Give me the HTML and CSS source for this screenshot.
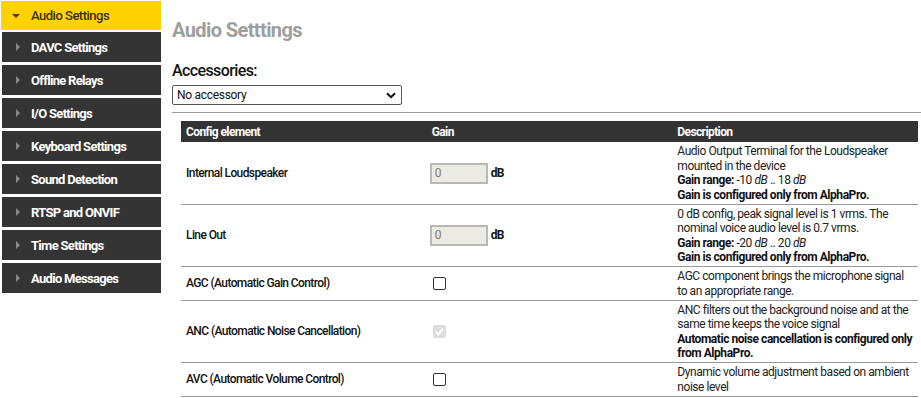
FILE: index.html
```html
<!DOCTYPE html>
<html>
<head>
<meta charset="utf-8">
<link rel="stylesheet" href="styles.css">
</head>
<body>
<div class="page">
  <nav class="sidebar">
    <div class="nav-item active"><span class="tri-down"></span>Audio Settings</div>
    <div class="nav-item"><span class="tri-right"></span>DAVC Settings</div>
    <div class="nav-item"><span class="tri-right"></span>Offline Relays</div>
    <div class="nav-item"><span class="tri-right"></span>I/O Settings</div>
    <div class="nav-item"><span class="tri-right"></span>Keyboard Settings</div>
    <div class="nav-item"><span class="tri-right"></span>Sound Detection</div>
    <div class="nav-item"><span class="tri-right"></span>RTSP and ONVIF</div>
    <div class="nav-item"><span class="tri-right"></span>Time Settings</div>
    <div class="nav-item"><span class="tri-right"></span>Audio Messages</div>
  </nav>
  <main class="main">
    <h1 class="title">Audio Setttings</h1>
    <h2 class="subtitle">Accessories:</h2>
    <div class="select">
      <span>No accessory</span>
      <svg class="chev" width="10" height="7" viewBox="0 0 10 7"><path d="M1 1.2 L5 5.2 L9 1.2" fill="none" stroke="#111" stroke-width="2"/></svg>
    </div>
    <div class="rule"></div>
    <table class="config">
      <thead>
        <tr><th>Config element</th><th>Gain</th><th>Description</th></tr>
      </thead>
      <tbody>
        <tr>
          <td class="name">Internal Loudspeaker</td>
          <td><span class="gain"><span class="inp">0</span><b>dB</b></span></td>
          <td class="desc">Audio Output Terminal for the Loudspeaker mounted in the device<br><b>Gain range:</b> -10 <i>dB</i> .. 18 <i>dB</i><br><b>Gain is configured only from AlphaPro.</b></td>
        </tr>
        <tr>
          <td class="name">Line Out</td>
          <td><span class="gain"><span class="inp">0</span><b>dB</b></span></td>
          <td class="desc">0 dB config, peak signal level is 1 vrms. The nominal voice audio level is 0.7 vrms.<br><b>Gain range:</b> -20 <i>dB</i> .. 20 <i>dB</i><br><b>Gain is configured only from AlphaPro.</b></td>
        </tr>
        <tr>
          <td class="name">AGC (Automatic Gain Control)</td>
          <td><span class="cb"></span></td>
          <td class="desc">AGC component brings the microphone signal to an appropriate range.</td>
        </tr>
        <tr>
          <td class="name">ANC (Automatic Noise Cancellation)</td>
          <td><span class="cb checked"><svg width="11" height="11" viewBox="0 0 11 11"><path d="M2 5.8 L4.4 8.2 L9 2.6" fill="none" stroke="#fff" stroke-width="2"/></svg></span></td>
          <td class="desc">ANC filters out the background noise and at the same time keeps the voice signal<br><b>Automatic noise cancellation is configured only from AlphaPro.</b></td>
        </tr>
        <tr>
          <td class="name">AVC (Automatic Volume Control)</td>
          <td><span class="cb"></span></td>
          <td class="desc">Dynamic volume adjustment based on ambient noise level</td>
        </tr>
      </tbody>
    </table>
  </main>
</div>
</body>
</html>
```
FILE: styles.css
```css
* { box-sizing: border-box; }
html, body { margin: 0; padding: 0; background: #fff; }
body { font-family: Roboto, "Noto Sans", Arial, sans-serif; color: #222; letter-spacing: -0.6px; }
.page { display: flex; align-items: flex-start; }
.sidebar { width: 161px; padding-top: 1px; flex: none; }
.nav-item {
  height: 30px; margin: 0 0 3px 2px; background: #343434; color: #fff;
  font-size: 13px; font-weight: 700; display: flex; align-items: center;
  padding-left: 14px; letter-spacing: -0.7px;
}
.nav-item.active { background: #ffd200; color: #3a3000; font-weight: 500; height: 29px; margin: 0 0 2px 1px; padding-left: 11px; letter-spacing: -0.5px; }
.tri-right { width: 0; height: 0; border-top: 4px solid transparent; border-bottom: 4px solid transparent; border-left: 4px solid #888; margin-right: 11px; }
.tri-down { width: 0; height: 0; border-left: 4px solid transparent; border-right: 4px solid transparent; border-top: 4px solid #4a3e00; margin-right: 11px; margin-top: 1px; }
.main { flex: 1; padding-left: 11px; padding-top: 1px; }
.title { margin: 16px 0 0; font-size: 20px; font-weight: 700; color: #9e9e9e; line-height: 26px; }
.subtitle { margin: 18px 0 0; font-size: 16px; font-weight: 500; color: #111; line-height: 20px; }
.select { width: 230px; height: 20px; margin-top: 4px; border: 1px solid #555; border-radius: 2px; font-size: 12px; display: flex; align-items: center; justify-content: space-between; padding: 0 5px 0 4px; color: #111; letter-spacing: -0.3px; }
.chev { margin-top: 1px; }
.rule { height: 1px; background: #9a9a9a; margin-top: 7px; }
.config { border-collapse: collapse; margin: 8px 0 0 9px; width: 737px; table-layout: fixed; font-size: 12px; }
.config th { background: #333; color: #fff; font-weight: 700; text-align: left; height: 21px; padding: 0 5px; line-height: 14px; }
.config td { border-bottom: 1px solid #999; padding: 2px 5px 1.5px; line-height: 14.5px; vertical-align: middle; }
.config td.name { font-weight: 500; color: #111; }
.config td.desc { color: #222; letter-spacing: -0.45px; }
.config td.desc b { color: #111; font-weight: 700; }
.gain { display: flex; align-items: center; gap: 3px; margin-left: -2px; }
.inp { width: 58px; height: 21px; background: #ebebe4; border: 2px solid #b9b9b2; color: #8a7a5a; padding-left: 3px; line-height: 17px; }
.gain b { color: #111; }
.cb { display: block; width: 13px; height: 13px; border: 1px solid #333; border-radius: 2px; margin-left: 1px; }
.cb.checked { border-color: #ddd; background: #ddd; display: flex; align-items: center; justify-content: center; }
```
